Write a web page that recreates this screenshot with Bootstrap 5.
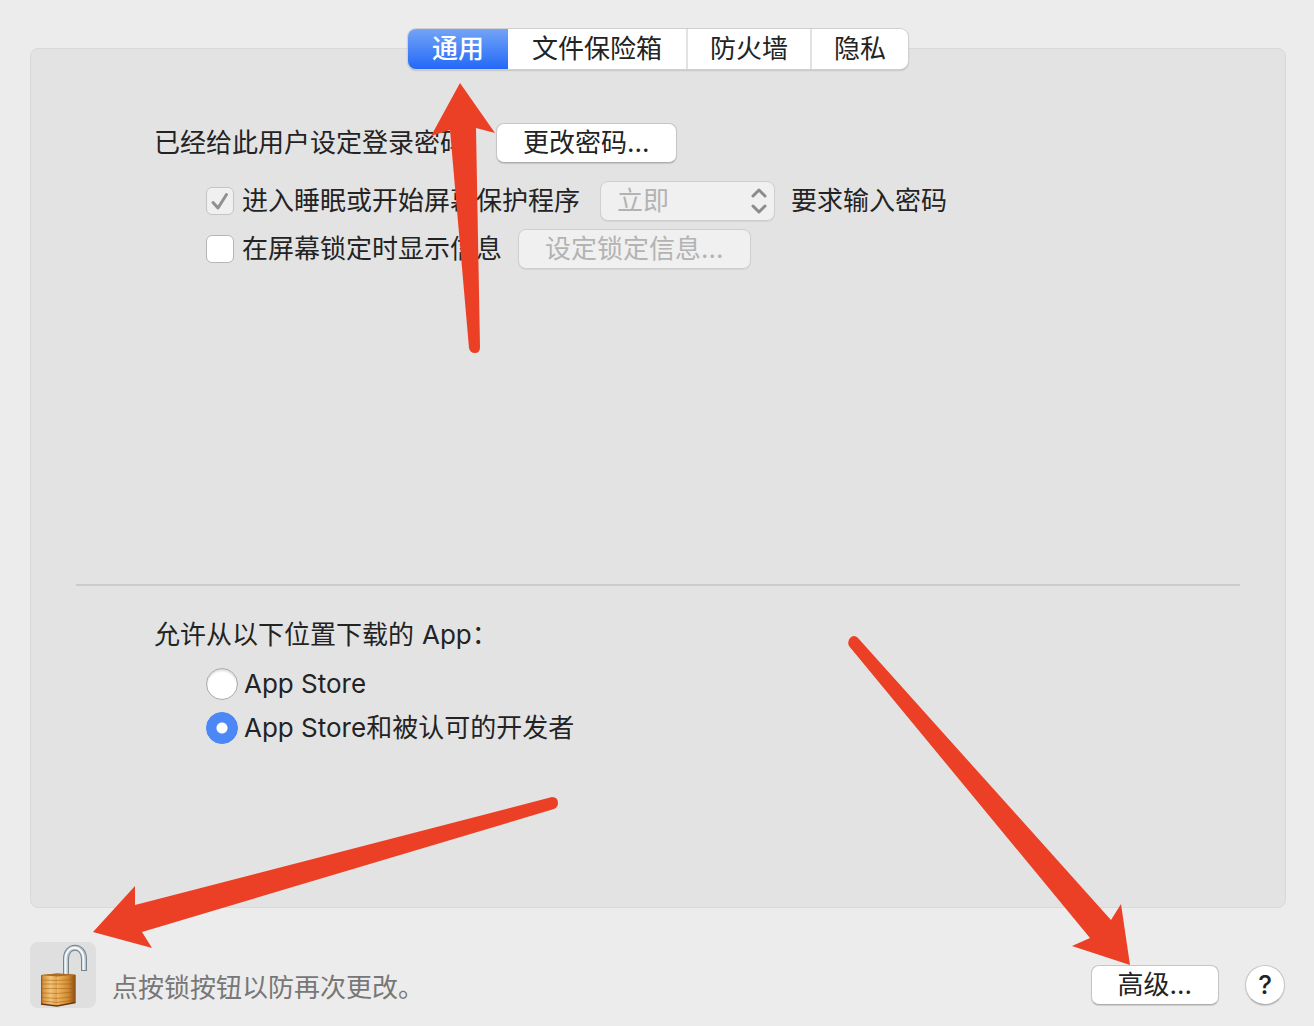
<!DOCTYPE html>
<html lang="zh-CN">
<head>
<meta charset="utf-8">
<meta name="viewport" content="width=device-width, initial-scale=1">
<title>安全性与隐私</title>
<link href="https://cdn.jsdelivr.net/npm/bootstrap@5.3.0/dist/css/bootstrap.min.css" rel="stylesheet">
<style>
  body {
    background: #ececec;
    color: #232323;
    font-family: Inter, "Noto Sans CJK SC", sans-serif;
    font-size: 26px;
    line-height: 32px;
  }
  .prefs { padding: 29px 28px 18px 30px; }
  .seg-bar { border-radius: 8px; box-shadow: 0 0 0 1px #d0d0d0, 0 1px 2px #888; z-index: 1; }
  .seg {
    height: 40px;
    padding: 0 22px;
    border: 0;
    border-left: 2px solid #e2e2e2;
    background: #fff;
    color: inherit;
    line-height: 40px;
  }
  .seg:first-child { border-radius: 8px 0 0 8px; }
  .seg:last-child { border-radius: 0 8px 8px 0; }
  .seg.active, .seg.active + .seg { border-left: 0; padding: 0 24px; }
  .seg.active { background: linear-gradient(#74a4f6, #2369f8); color: #fff; font-weight: 500; }
  .pane {
    margin-top: -21px;
    background: #e3e3e3;
    border: 1px solid #d9d9d9;
    border-radius: 8px;
    padding: 74px 45px 0;
  }
  .pane-group { padding-left: 78px; }
  .indented { padding-left: 52px; }
  .password-row { gap: 30px; }
  .lock-options { padding-top: 18px; }
  .push {
    height: 40px;
    border: 1px solid #c6c6c6;
    border-bottom-color: #adadad;
    border-radius: 8px;
    background: #fff;
    color: inherit;
    padding: 0 26px;
    line-height: 38px;
    box-shadow: 0 1px 1px #0002;
  }
  .push:disabled, .popup:disabled {
    background: #f0f0f0;
    border-color: #cfcfcf;
    color: #b3b3b3;
    opacity: 1;
    box-shadow: 0 1px 1px #0001;
  }
  .popup {
    display: block;
    appearance: none;
    width: 175px;
    height: 40px;
    padding: 0 16px;
    border: 1px solid #cfcfcf;
    border-radius: 8px;
    line-height: 38px;
  }
  .popup-wrap { margin-left: 12px; }
  .popup-arrows { right: 8px; top: 6px; pointer-events: none; }
  .form-check-input.tick { width: 28px; height: 28px; margin: 0; border: 1px solid #b5b5b5; border-radius: 6px; background-color: #fff; flex: none; }
  .form-check-input.tick:disabled {
    opacity: 1;
    background-color: #f0f0f0;
    border-color: #c4c4c4;
    background-size: 28px 28px;
    background-image: url("data:image/svg+xml,%3Csvg xmlns='http://www.w3.org/2000/svg' viewBox='0 0 28 28'%3E%3Cpath d='M7 15.500l5 5.500L20.500 7.500' fill='none' stroke='%23909090' stroke-width='3' stroke-linecap='round' stroke-linejoin='round'/%3E%3C/svg%3E");
  }
  .form-check-input.dot { width: 32px; height: 32px; margin: 0; border: 1px solid #a9a9a9; background-color: #fff; box-shadow: inset 0 2px 2px #0002; flex: none; }
  .form-check-input.dot:checked {
    border-color: #4c87f6;
    background-color: #4c87f6;
    background-image: radial-gradient(circle, #fff 5px, #4c87f6 6px);
    box-shadow: none;
  }
  .gap-check { gap: 8px; }
  .gap-radio { gap: 6px; }
  .rule { height: 2px; background: #cbcbcb; }
  .sources { padding-top: 33px; padding-bottom: 163px; }
  .source-list { margin-top: 17px; gap: 12px; }
  .foot { margin-top: 34px; }
  .lock-btn { width: 66px; height: 66px; border: 0; border-radius: 8px; background: #dfdfdf; padding: 0; }
  .lock-note { color: #777; margin-left: 16px; margin-bottom: 4px; }
  .foot-actions { gap: 26px; margin-bottom: 3px; padding-right: 1px; }
  .help-btn { width: 40px; height: 40px; border-radius: 50%; padding: 0; font-weight: 500; }
  .arrows { top: 0; left: 0; pointer-events: none; z-index: 5; }
</style>
<script src="https://cdn.jsdelivr.net/npm/bootstrap@5.3.0/dist/js/bootstrap.bundle.min.js"></script>
</head>
<body class="position-relative">
<main class="prefs min-vh-100 d-flex flex-column">
  <nav class="seg-bar d-flex align-self-center position-relative" aria-label="设置分类">
    <button type="button" class="seg active">通用</button>
    <button type="button" class="seg">文件保险箱</button>
    <button type="button" class="seg">防火墙</button>
    <button type="button" class="seg">隐私</button>
  </nav>

  <section class="pane flex-grow-1 d-flex flex-column">
    <div class="pane-group flex-grow-1">
      <div class="password-row d-flex align-items-center">
        <span>已经给此用户设定登录密码</span>
        <button type="button" class="push">更改密码...</button>
      </div>
      <div class="indented lock-options d-flex flex-column gap-2">
        <div class="d-flex align-items-center gap-check">
          <input class="form-check-input tick" type="checkbox" id="sleepLock" checked disabled>
          <label for="sleepLock">进入睡眠或开始屏幕保护程序</label>
          <div class="popup-wrap position-relative">
            <select class="popup" aria-label="要求密码的时间" disabled><option>立即</option></select>
            <svg class="popup-arrows position-absolute" width="16" height="28" viewBox="0 0 16 28" fill="none" stroke="#8b8b8b" stroke-width="3" stroke-linecap="round" stroke-linejoin="round"><path d="M2 9l6-6 6 6M2 19l6 6 6-6"/></svg>
          </div>
          <span class="ms-2">要求输入密码</span>
        </div>
        <div class="d-flex align-items-center gap-check">
          <input class="form-check-input tick" type="checkbox" id="lockMsg">
          <label for="lockMsg">在屏幕锁定时显示信息</label>
          <button type="button" class="push ms-2" disabled>设定锁定信息...</button>
        </div>
      </div>
    </div>

    <div class="rule"></div>

    <div class="pane-group sources">
      <div id="srcTitle">允许从以下位置下载的<span class="ms-2">App：</span></div>
      <div class="indented source-list d-flex flex-column" role="radiogroup" aria-labelledby="srcTitle">
        <div class="d-flex align-items-center gap-radio">
          <input class="form-check-input dot" type="radio" name="src" id="srcStore">
          <label for="srcStore">App Store</label>
        </div>
        <div class="d-flex align-items-center gap-radio">
          <input class="form-check-input dot" type="radio" name="src" id="srcDev" checked>
          <label for="srcDev">App Store和被认可的开发者</label>
        </div>
      </div>
    </div>
  </section>

  <footer class="foot d-flex align-items-end">
    <button type="button" class="lock-btn" aria-label="锁定">
      <svg class="d-block" width="66" height="66" viewBox="0 0 66 66">
        <defs>
          <linearGradient id="brassL" x1="0" x2="1"><stop offset="0" stop-color="#8a4a12"/><stop offset=".12" stop-color="#d8923a"/><stop offset=".6" stop-color="#f3c578"/><stop offset="1" stop-color="#e0a04a"/></linearGradient>
          <linearGradient id="brassR" x1="0" x2="1"><stop offset="0" stop-color="#f0b860"/><stop offset=".6" stop-color="#d28a30"/><stop offset="1" stop-color="#8d4c10"/></linearGradient>
        </defs>
        <path d="M36 34V17C36 2 54 2 54 17V29" fill="none" stroke="#77838c" stroke-width="6"/>
        <path d="M36 34V17C36 2 54 2 54 17V28" fill="none" stroke="#b9c4cc" stroke-width="4"/>
        <path d="M35.500 34V17C35.500 2 53.500 2 53.500 17V28" fill="none" stroke="#f4f9fb" stroke-width="2"/>
        <path d="M11 33L27 31.500L45.500 32.500V60.500L27 64L11 62Z" fill="#c07a28"/>
        <path d="M11 33.500L27 34V64L11 62Z" fill="url(#brassL)"/>
        <path d="M27 34L45.500 33V60.500L27 64Z" fill="url(#brassR)"/>
        <path d="M11 33L27 31.500L45.500 32.500L27 34.500Z" fill="#a86c28"/>
        <path d="M12 38L27 38.500L45 37.500M12 42H45M12 46.500H45M12 51L27 51.500L45 50M12 55.500L27 56.500L45 54.500M12 59L27 60.500L45 58" fill="none" stroke="#9a5c1c" stroke-opacity=".5"/>
        <path d="M11 62L27 64L45.500 60.500" fill="none" stroke="#6e370a" stroke-width="1.500"/>
      </svg>
    </button>
    <span class="lock-note">点按锁按钮以防再次更改。</span>
    <div class="foot-actions d-flex ms-auto">
      <button type="button" class="push">高级...</button>
      <button type="button" class="push help-btn" aria-label="帮助">?</button>
    </div>
  </footer>
</main>

<svg class="arrows position-absolute" width="1314" height="1026" viewBox="0 0 1314 1026" fill="#ec4026" aria-hidden="true">
  <path d="M460 83L495 133L476 128L480 347Q480 353 475 353Q470 353 469 348L450 130L431 136Z"/>
  <path d="M93 932L135 886V905L552 797Q558 797 558 803Q558 807 554 809L142 932L152 948Z"/>
  <path d="M1130 965L1121 904L1111 920L858 638Q854 634 850 638Q847 642 849 646L1090 938L1072 946Z"/>
</svg>
</body>
</html>
